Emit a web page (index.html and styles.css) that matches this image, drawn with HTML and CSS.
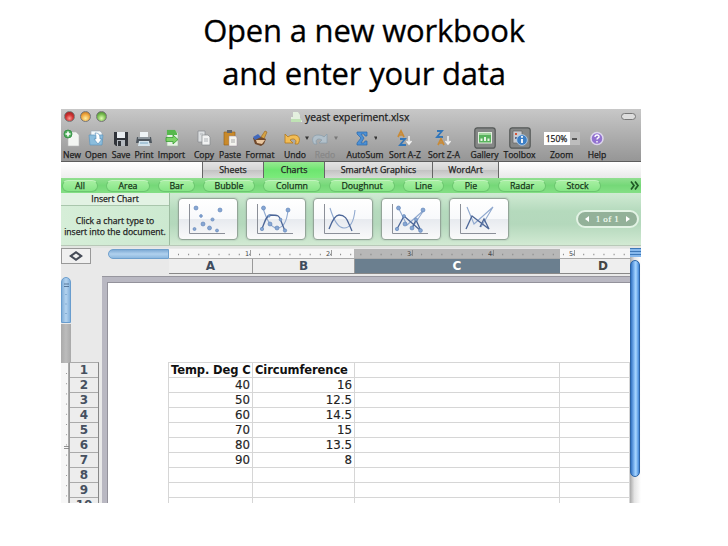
FILE: index.html
```html
<!DOCTYPE html>
<html lang="en">
<head>
<meta charset="utf-8">
<title>Open a new workbook</title>
<link rel="stylesheet" href="styles.css">
</head>
<body>
<h1 class="title">Open a new workbook<br>and enter your data</h1>
<main class="window">
  <header class="chrome">
    <div class="titlebar">
      <div class="lights"><i class="red"></i><i class="amber"></i><i class="green"></i></div>
      <div class="docname"><svg width="12" height="12" viewBox="0 0 12 12"><path d="M1 6h2V1h5l2 3v3l2 3v1H1z" fill="#e4f0df"/><path d="M1 8h10v3H1z" fill="#bfe2b4"/></svg><span>yeast experiment.xlsx</span></div>
      <i class="collapse"></i>
    </div>
    <nav class="tools">
      <div class="tool"><svg width="18" height="20" viewBox="0 0 18 20"><path d="M5 4h8l3 3v11H5z" fill="#f3f5f2" stroke="#bbb" stroke-width=".6"/><circle cx="5" cy="6" r="4" fill="#4fae5c" stroke="#2f8a3f" stroke-width=".8"/><path d="M5 3.500v5M2.500 6h5" stroke="#fff" stroke-width="1.600"/></svg><span>New</span></div>
      <div class="tool"><svg width="18" height="20" viewBox="0 0 18 20"><path d="M4 3h9l2 2v9H4z" fill="#f4f8fa" stroke="#9ab" stroke-width=".6"/><path d="M2 7h14l-1 10H3z" fill="#8bbddd" stroke="#5f96bd" stroke-width=".7"/><path d="M8 5c4 0 5 2 5 6h2l-4 5-4-5h2c0-3 0-4-1-6z" fill="#fff" stroke="#4d87b5" stroke-width=".6"/></svg><span>Open</span></div>
      <div class="tool"><svg width="18" height="20" viewBox="0 0 18 20"><path d="M2 4h14v14H4l-2-2z" fill="#31343a"/><path d="M5 4h8v6H5z" fill="#e9edf1"/><path d="M5 12h8v6H5z" fill="#b5bac0"/><path d="M6 13h3v5H6z" fill="#34373c"/></svg><span>Save</span></div>
      <div class="tool"><svg width="18" height="20" viewBox="0 0 18 20"><path d="M5 4h8v6H5z" fill="#eef3f6"/><path d="M2 9h14l1 6H1z" fill="#4e565e"/><path d="M3 9h12v2H3z" fill="#8d969d"/><path d="M4 13h10l1 5H3z" fill="#d5e4ed"/><path d="M5 15h8" stroke="#7ca8c4"/></svg><span>Print</span></div>
      <div class="tool"><svg width="18" height="20" viewBox="0 0 18 20"><path d="M4 2h8l3 3v13H4z" fill="#e8f2e5" stroke="#9cb69b" stroke-width=".6"/><path d="M4 2h8l2 3v2H4z" fill="#57b84d"/><path d="M3 9.500h7V7l5 4.500-5 4.500v-2.500H3z" fill="#7ed468" stroke="#379c33" stroke-width=".8"/></svg><span>Import</span></div>
      <div class="tool"><svg width="18" height="20" viewBox="0 0 18 20"><path d="M3 3h7v11H3z" fill="#dcdfe1" stroke="#868b90" stroke-width=".7"/><path d="M7 7h6l2 2v8H7z" fill="#f1f2f2" stroke="#858a8e" stroke-width=".7"/><path d="M9 11h4M9 13h4M5 6h3" stroke="#b0b4b8"/></svg><span>Copy</span></div>
      <div class="tool"><svg width="18" height="20" viewBox="0 0 18 20"><path d="M3 4h11v13H3z" fill="#c98a2b" stroke="#946016" stroke-width=".6"/><path d="M6 2h5v3H6z" fill="#61666d"/><path d="M8 8h7l1 2v8H8z" fill="#f4f4ef" stroke="#989" stroke-width=".5"/><path d="M10 12h4M10 14h4" stroke="#aaa"/></svg><span>Paste</span></div>
      <div class="tool"><svg width="18" height="20" viewBox="0 0 18 20"><path d="M10 9l4-6 2 1-3 7z" fill="#d6a445" stroke="#97621b" stroke-width=".6"/><path d="M2 10l5-2 8 3-2 5-3 2-6-2z" fill="#70492c"/><path d="M2 9l5-3 3 3-6 3z" fill="#4269bc"/><path d="M5 12l9 0-3 4-5-1z" fill="#e9c7a0"/></svg><span>Format</span></div>
      <div class="tool"><svg width="30" height="20" viewBox="0 0 30 20"><path d="M5 6v9h8l-3-3c3-2 6-1 6 2l-1 2h3c3-5 1-9-4-9-3 0-5 1-6 2z" fill="#f2bd55" stroke="#b47a1d" stroke-width=".8"/><path d="M25 8.500h4l-2 3.500z" fill="#333"/></svg><span>Undo</span></div>
      <div class="tool off"><svg width="30" height="20" viewBox="0 0 30 20"><path d="M17 6v9H9l3-3c-3-2-6-1-6 2l1 2H4c-3-5-1-9 4-9 3 0 5 1 6 2z" fill="#b2c0ca" stroke="#869cab" stroke-width=".7"/><path d="M24 8.500h4l-2 3.500z" fill="#777"/></svg><span>Redo</span></div>
      <div class="tool"><svg width="24" height="20" viewBox="0 0 24 20"><path d="M4 4h10v4h-2l-1-2H8l3 4-3 5h3l1-2h2v4H4v-2l4-5-4-4z" fill="#4d91d6" stroke="#2a67a9" stroke-width=".7"/><path d="M21 8.500h3.800l-1.900 3.500z" fill="#333"/></svg><span>AutoSum</span></div>
      <div class="tool"><svg width="18" height="20" viewBox="0 0 18 20"><path d="M2 9l3-6 3 6M3.200 7h3.600" fill="none" stroke="#c98a35" stroke-width="1.700"/><path d="M4 11h5l-5 6h6" fill="none" stroke="#3276b9" stroke-width="1.800"/><path d="M13 8v7M10.500 13l2.500 3 2.500-3" fill="none" stroke="#f2f2f2" stroke-width="1.500"/></svg><span>Sort A-Z</span></div>
      <div class="tool"><svg width="18" height="20" viewBox="0 0 18 20"><path d="M2 3h5L2 9h6" fill="none" stroke="#3276b9" stroke-width="1.800"/><path d="M3 17l3-6 3 6M4.200 15h3.600" fill="none" stroke="#c98a35" stroke-width="1.700"/><path d="M13 8v7M10.500 13l2.500 3 2.500-3" fill="none" stroke="#f2f2f2" stroke-width="1.500"/></svg><span>Sort Z-A</span></div>
      <div class="tool"><svg width="22" height="22" viewBox="0 0 22 22"><rect x=".8" y=".8" width="20.400" height="20.400" rx="2.500" fill="#858786" stroke="#555958" stroke-width="1.200"/><rect x="4.500" y="5.500" width="13" height="10.500" fill="#58b35d" stroke="#e3efdf"/><path d="M5 7h12" stroke="#a4d8a0" stroke-width="2"/><path d="M6.500 14v-2.500h2V14M10 14v-4h2v4M13.500 14v-2.500h2V14" fill="#e8f4e4"/></svg><span>Gallery</span></div>
      <div class="tool"><svg width="22" height="22" viewBox="0 0 22 22"><rect x=".8" y=".8" width="20.400" height="20.400" rx="2.500" fill="#858786" stroke="#555958" stroke-width="1.200"/><path d="M4 4h9v12H4z" fill="#c8cbd0" stroke="#666" stroke-width=".7"/><path d="M6 6h2v2H6z" fill="#d65336"/><path d="M6 10h4v2H6z" fill="#596a8d"/><circle cx="13" cy="13" r="5.300" fill="#3c7fc6" stroke="#bbd5ef" stroke-width=".8"/><path d="M13 12v4M13 9v1.700" stroke="#fff" stroke-width="1.800"/></svg><span>Toolbox</span></div>
      <div class="tool"><div class="zoom"><b>150%</b><i></i></div><span>Zoom</span></div>
      <div class="tool"><svg width="18" height="20" viewBox="0 0 18 20"><circle cx="9" cy="10.500" r="6" fill="#9272d0" stroke="#ded7ed" stroke-width="1.500"/><path d="M7 9c0-3 4.500-2.500 4 0-.2 1-2 1-2 2.600M9 13v1.500" fill="none" stroke="#fff" stroke-width="1.400"/></svg><span>Help</span></div>
    </nav>
  </header>
  <nav class="tabs"><i class="blank"></i><span class="w61">Sheets</span><span class="w61 active">Charts</span><span class="w108">SmartArt Graphics</span><span class="w66">WordArt</span><i class="rest"></i></nav>
  <nav class="types"><span class="p36">All</span><span class="p44">Area</span><span class="p37">Bar</span><span class="p52">Bubble</span><span class="p58">Column</span><span class="p66">Doughnut</span><span class="p41">Line</span><span class="p38">Pie</span><span class="p48">Radar</span><span class="p47">Stock</span><svg width="10" height="9" viewBox="0 0 10 9"><path d="M1 .5l3 4-3 4M5 .5l3 4-3 4" fill="none" stroke="#1f5a25" stroke-width="1.700"/></svg></nav>
  <section class="gallery">
    <aside><h2>Insert Chart</h2><p>Click a chart type to<br>insert into the document.</p></aside>
    <div class="cards">
      <div class="card"><svg width="60" height="42" viewBox="0 0 60 42"><path class="axis" d="M11.500 6v29.500H47"/><g class="dots"><circle cx="18" cy="10" r="2"/><circle cx="42" cy="12" r="2"/><circle cx="23" cy="18" r="1.400"/><circle cx="34.500" cy="21.500" r="1.600"/><circle cx="25" cy="26" r="2"/><circle cx="16.500" cy="31" r="1.500"/><circle cx="31.500" cy="30" r="2"/><circle cx="39" cy="32.500" r="1.500"/></g></svg></div>
      <div class="card"><svg width="60" height="42" viewBox="0 0 60 42"><path class="axis" d="M11.500 6v29.500H47"/><path class="lite" d="M17 10c3 10 7 20 14 20s10-8 11-18"/><path class="dark" d="M16 31c3-8 4-13 8-14 8 0 9 0 11 6l4 10"/><g class="dots"><circle cx="17.500" cy="10" r="2"/><circle cx="42" cy="12" r="2"/><circle cx="23" cy="18" r="1.200"/><circle cx="34.500" cy="21.500" r="1.400"/><circle cx="24" cy="26" r="2"/><circle cx="16" cy="31" r="1.700"/><circle cx="31" cy="30" r="2"/><circle cx="39" cy="32.500" r="1.700"/></g></svg></div>
      <div class="card"><svg width="60" height="42" viewBox="0 0 60 42"><path class="axis" d="M11.500 6v29.500H47"/><path class="lite" d="M17 10c3 10 7 20 14 20s10-8 11-18"/><path class="dark" d="M16 31c3-8 6-14 10-14 6 0 8 4 10 9l3 7"/></svg></div>
      <div class="card"><svg width="60" height="42" viewBox="0 0 60 42"><path class="axis" d="M11.500 6v29.500H47"/><path class="lite" d="M17.500 10L26 27 43 12 31 30"/><path class="dark" d="M16 31l7-13 17 15-5-11-4 8"/><g class="dots"><circle cx="17.500" cy="10" r="2"/><circle cx="42" cy="12" r="2"/><circle cx="23" cy="18" r="1.500"/><circle cx="35" cy="21.500" r="1.600"/><circle cx="24" cy="26" r="2"/><circle cx="16" cy="31" r="1.700"/><circle cx="31" cy="30" r="2"/><circle cx="39.500" cy="32.500" r="1.900"/></g></svg></div>
      <div class="card"><svg width="60" height="42" viewBox="0 0 60 42"><path class="axis" d="M11.500 6v29.500H47"/><path class="lite" d="M18 9l7 17 19-17-12 20"/><path class="dark" d="M17 31l6-13 17 13-5-10-4 8"/></svg></div>
    </div>
    <div class="pager"><i class="prev"></i><span>1 of 1</span><i class="next"></i></div>
  </section>
  <section class="sheet">
    <div class="left">
      <div class="corner"><svg width="16" height="10" viewBox="0 0 16 10"><path d="M8 0l7 5-7 5-7-5zM8 2.500L4.500 5 8 7.500 11.500 5z" fill="#454b57" fill-rule="evenodd"/></svg></div>
      <div class="leftbody">
        <div class="vruler"><div class="vblue"><svg width="10" height="45" viewBox="0 0 10 45"><path d="M5 16v20" stroke="#5f8fbd" stroke-dasharray="1 8.500"/><path d="M3 8.500h5M3 6h5" stroke="#426287" stroke-width=".8"/></svg></div><div class="vgray"></div><div class="vwhite"><svg width="8" height="141" viewBox="0 0 8 141"><path d="M5.500 10v124" stroke="#999" stroke-dasharray="1 9.200"/><path d="M3 83.500h5M3 85.500h5" stroke="#777" stroke-width=".8"/></svg></div></div>
        <div class="rownums"><span>1</span><span>2</span><span>3</span><span>4</span><span>5</span><span>6</span><span>7</span><span>8</span><span>9</span><span>10</span></div>
      </div>
    </div>
    <div class="center">
      <div class="hruler"><i class="hblue"></i><svg width="461" height="9" viewBox="0 0 461 9"><path fill="#f7f7f7" d="M0 0h461v9H0z"/><path fill="#b7b7b7" d="M185 0h206v9H185z"/><path d="M9 5.500h452" stroke="#888" stroke-width="1.500" stroke-dasharray="1 9.130"/><path d="M81.500 1v6M162.500 1v6M243.500 1v6M324.500 1v6M405.500 1v6" stroke="#777" stroke-width=".7"/><g font-size="6.500" fill="#444"><text x="76" y="6.800">1</text><text x="157" y="6.800">2</text><text x="238" y="6.800">3</text><text x="319" y="6.800">4</text><text x="400" y="6.800">5</text></g></svg></div>
      <div class="colheads"><span>A</span><span>B</span><span class="sel">C</span><span class="last">D</span></div>
      <div class="page">
        <div class="cells">
          <b>Temp. Deg C</b><b>Circumference</b><i></i><i></i>
          <span>40</span><span>16</span><i></i><i></i>
          <span>50</span><span>12.5</span><i></i><i></i>
          <span>60</span><span>14.5</span><i></i><i></i>
          <span>70</span><span>15</span><i></i><i></i>
          <span>80</span><span>13.5</span><i></i><i></i>
          <span>90</span><span>8</span><i></i><i></i>
          <i></i><i></i><i></i><i></i>
          <i></i><i></i><i></i><i></i>
          <i></i><i></i><i></i><i></i>
        </div>
      </div>
    </div>
    <div class="scroll"><i class="split"></i><i class="thumb"></i></div>
  </section>
</main>
</body>
</html>
```
FILE: styles.css
```css
* { box-sizing: border-box; }
body { margin: 0; width: 728px; height: 546px; background: #fff; overflow: hidden; font-family: "Open Sans", sans-serif; color: #222; }
i { font-style: normal; display: block; flex: none; }
svg { display: block; flex: none; }
.title { margin: 0; height: 109px; padding-top: 9px; text-align: center; font: 400 31px/43px "Open Sans", sans-serif; letter-spacing: -.2px; color: #000; -webkit-text-stroke: .3px; }
.window { width: 580px; height: 394px; margin-left: 61px; overflow: hidden; background: #ececec; display: flex; flex-direction: column; }
.chrome { height: 53px; flex: none; background: linear-gradient(#c8c8c8, #b1b1b1 45%, #969696); border-bottom: 1px solid #5c5c5c; }
.titlebar { height: 17px; display: flex; align-items: center; justify-content: space-between; padding: 0 5px 2px 3px; }
.lights { display: flex; gap: 5px; width: 226px; }
.lights i { width: 11px; height: 11px; border-radius: 50%; border: 1px solid #777; }
.red { background: radial-gradient(circle at 50% 70%, #ff9d94, #d23434 45%, #8f1a1a); }
.amber { background: radial-gradient(circle at 50% 70%, #fff0a0, #eea33b 55%, #a86820); }
.green { background: radial-gradient(circle at 50% 70%, #e0ffb0, #74b94c 55%, #3f7a2c); }
.docname { display: flex; gap: 3px; align-items: center; flex: 1; font-size: 10.3px; line-height: 14px; white-space: nowrap; color: #1c1c1c; -webkit-text-stroke: .25px; }
.collapse { width: 15px; height: 7px; border: 1px solid #777; border-radius: 4px; background: #ddd; }
.tools { display: grid; grid-template-columns: 22px 26px 24px 22px 33px 32px 20px 40px 30px 30px 50px 30px 48px 33px 37px 47px 24px; height: 35px; }
.tool { display: flex; flex-direction: column; align-items: center; justify-content: space-between; height: 36px; padding-top: 1px; font-size: 8.600px; line-height: 11px; white-space: nowrap; color: #1c1c1c; -webkit-text-stroke: .25px; }
.tool > svg { height: 22px; }
.tool span { margin-bottom: 1px; }
.off span { color: #888; }
.zoom { display: flex; margin-top: 5px; width: 36px; height: 13px; background: #fff; font-size: 8.500px; line-height: 13px; }
.zoom b { font-weight: 400; width: 26px; text-align: center; }
.zoom i { flex: 1; background: linear-gradient(#555, #555) center/5px 2px no-repeat #bdbdbd; }
.tabs { display: flex; height: 16px; flex: none; font-size: 8.800px; line-height: 17px; text-align: center; color: #222; -webkit-text-stroke: .25px; }
.tabs span { background: linear-gradient(#e4e4e4, #d4d4d4 50%, #c2c2c2 50%, #dadada); border-right: 1px solid #666; white-space: nowrap; }
.tabs .active { background: linear-gradient(#97ea91, #6de570 50%, #7ceb7c); }
.blank { width: 142px; border-right: 1px solid #666; background: linear-gradient(#fff, #eee); }
.rest { flex: 1; background: linear-gradient(#fff, #e9e9e9); }
.w61 { width: 61px; } .w66 { width: 66px; } .w108 { width: 108px; }
.types { display: flex; align-items: center; gap: 8px; height: 15px; flex: none; padding-left: 1px; background: linear-gradient(#91df90, #75d878 50%, #84df85); font-size: 8.800px; line-height: 10px; text-align: center; color: #17351a; -webkit-text-stroke: .25px; }
.types span { height: 12px; border: 1px solid #6cc670; border-top-color: #c3f3bf; border-radius: 6px; background: linear-gradient(#a7f0a2, #86e586); }
.types svg { margin-left: auto; margin-right: 1px; }
.p36 { width: 36px; } .p37 { width: 37px; } .p38 { width: 38px; } .p41 { width: 41px; } .p44 { width: 44px; } .p47 { width: 47px; } .p48 { width: 48px; } .p52 { width: 52px; } .p58 { width: 58px; } .p66 { width: 66px; }
.gallery { display: flex; align-items: center; height: 53px; flex: none; background: linear-gradient(#d0ead3, #b5dabd 35%, #b4d8bc 60%, #d2ead3); border-bottom: 1px solid #b8c9b8; }
aside { width: 109px; height: 52px; flex: none; border-right: 1px solid #9cbba0; background: linear-gradient(90deg, #d6eed8, #cce9d0); font-size: 8.600px; text-align: center; white-space: nowrap; -webkit-text-stroke: .25px; }
aside h2 { margin: 0; font-size: inherit; font-weight: 400; line-height: 13px; height: 13px; border-bottom: 1px solid #a9c6ac; background: #e2f2e3; }
aside p { margin: 10px 0 0; line-height: 10.500px; }
.cards { display: flex; gap: 7.700px; margin-left: 8px; }
.card { width: 60px; height: 42px; border: 1px solid #93a598; border-radius: 4px; background: linear-gradient(#fff, #f8f9fb 50%, #e7eaef 50%, #fafafa); box-shadow: 0 0 1px 1px #9fb2a44d; }
.card svg { margin: -1px; }
.axis { fill: none; stroke: #8b8f98; stroke-width: 1; }
.lite { fill: none; stroke: #90a9cf; stroke-width: 1.100; }
.dark { fill: none; stroke: #4b6597; stroke-width: 1.300; }
.dots { fill: #86a6d3; stroke: #5b80b6; stroke-width: .6; }
.pager { display: flex; align-items: center; justify-content: space-between; width: 63px; height: 18px; margin-left: auto; margin-right: 2px; padding: 0 7px; border: 2px solid #e3f3e5; border-radius: 9px; background: #93b199; color: #f5fff5; font: 9px/14px "Liberation Serif", serif; letter-spacing: .4px; -webkit-text-stroke: .2px; }
.prev, .next { width: 0; height: 0; border: 3px solid transparent; }
.prev { border-right: 4px solid #fff; border-left: 0; }
.next { border-left: 4px solid #fff; border-right: 0; }
.sheet { display: flex; height: 257px; flex: none; border-top: 2px solid #e2e5e1; background: #e9e9e9; }
.left { width: 41px; flex: none; }
.corner { width: 30px; height: 16px; border: 1px solid #999; background: #f0f0f0; display: flex; align-items: center; justify-content: center; }
.leftbody { display: flex; padding-top: 13px; }
.vruler { width: 10px; flex: none; }
.vblue { height: 46px; border: 1px solid #699dce; border-radius: 5px 5px 0 0; background: linear-gradient(90deg, #83b0da, #b4d3ef, #83b1dc); }
.vblue svg { margin-left: -1px; }
.vgray { height: 39px; margin-top: 1px; background: linear-gradient(90deg, #aaa, #bcbcbc, #a9a9a9); }
.vwhite { width: 8px; height: 141px; background: #f7f7f7; border-right: 1px solid #aaa; }
.rownums { width: 30px; margin: 85px 0 0 -2px; background: #ededed; border-left: 1px solid #999; border-right: 1px solid #888; border-top: 1px solid #aaa; }
.rownums span { display: block; height: 15px; border-bottom: 1px solid #aaa; font: 700 12px/15px "DejaVu Sans", sans-serif; text-align: center; color: #46505f; }
.center { width: 528px; flex: none; }
.hruler { display: flex; height: 9px; margin: 1px 0 0 6px; }
.hruler text { font-family: "DejaVu Sans", sans-serif; }
.hblue { width: 61px; height: 10px; border: 1px solid #6fa0cd; border-radius: 5px 0 0 5px; background: linear-gradient(#7fabd4, #b0d1ee, #8db8df); }
.colheads { display: grid; grid-template-columns: 84px 102px 205px 70px; margin-left: 67px; height: 16px; border-bottom: 1px solid #888; border-top: 1px solid #aaa; background: #eee; font: 700 12px/14px "DejaVu Sans", sans-serif; text-align: center; color: #3f4c5e; }
.colheads span { border-right: 1px solid #999; }
.colheads .sel { background: #6b7f8f; color: #fff; border-color: #6b7f8f; }
.colheads .last { border: 0; padding-left: 16px; color: #444; }
.page { height: 228px; margin-top: 3px; border-left: 5px solid #b9b8c2; border-top: 5px solid #b9b8c2; background: #fff; box-shadow: inset 1px 1px #93929b, 0 -1px #97969e; padding: 80px 0 0 61px; }
.cells { display: grid; grid-template-columns: 84px 102px 205px 70px; grid-auto-rows: 15px; border-top: 1px solid #d6d6d6; border-left: 1px solid #d6d6d6; font: 11.800px/15px "DejaVu Sans", sans-serif; color: #222; }
.cells > * { border-right: 1px solid #d6d6d6; border-bottom: 1px solid #d6d6d6; white-space: nowrap; }
.cells b { padding-left: 2px; font-size: 11.500px; letter-spacing: -.1px; color: #111; }
.cells span { text-align: right; padding-right: 2px; -webkit-text-stroke: .15px; }
.scroll { width: 11px; flex: none; background: linear-gradient(90deg, #aaa, #e4e4e4 40%, #fff); }
.split { height: 9px; background: repeating-linear-gradient(#3d78b8 0 1px, #86b8ec 1px 3px); }
.thumb { width: 10px; height: 217px; margin-top: 3px; border: 1px solid #2c64a6; border-radius: 5px; background: linear-gradient(90deg, #3474c4, #8bc1f8 45%, #a9d7ff 60%, #4388d9); }
```
